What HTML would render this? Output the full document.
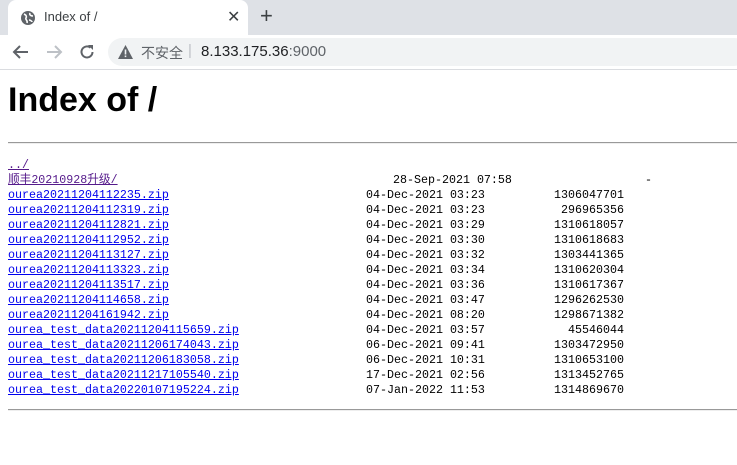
<!DOCTYPE html>
<html><head><meta charset="utf-8"><style>
*{margin:0;padding:0;box-sizing:border-box}
body{width:737px;height:465px;background:#fff;position:relative;overflow:hidden;font-family:"Liberation Sans","Noto Sans CJK SC",sans-serif}
.tabs{position:absolute;left:0;top:0;width:737px;height:35px;background:#dee1e6}
.tab{position:absolute;left:8px;top:0;width:240px;height:35px;background:#fff;border-radius:8px 8px 0 0}
.bar{position:absolute;left:0;top:35px;width:737px;height:35px;background:#fff;border-bottom:1px solid #dadce0}
.omni{position:absolute;left:108px;top:3px;width:640px;height:28px;background:#f1f3f4;border-radius:14px}
.r{position:absolute;left:0;height:15px;line-height:15px;font-family:"Liberation Mono","Noto Sans CJK SC",monospace;font-size:11.67px;white-space:pre;width:737px}
.r a{position:absolute;left:8px;color:#0000ee;text-decoration:underline}
.r a.v{color:#551a8b}
.r .d{position:absolute;left:366px;color:#000}
.r .s{position:absolute;right:113px;color:#000}
hr{position:absolute;left:8px;width:729px;border:0;border-top:1px solid #999;border-bottom:1px solid #eee;height:2px}
</style></head><body>
<div class="tabs"><div class="tab">
<svg style="position:absolute;left:12px;top:10px" width="16" height="16" viewBox="0 0 16 16"><circle cx="8" cy="8" r="7" fill="#5f6368"/><path d="M4 4c2 1 3 2 2 4s2 2 1 5M10 3c-1 2 1 3 3 3M9 10c1 0 3 1 3 2" stroke="#fff" stroke-width="1.6" fill="none"/></svg>
<span style="position:absolute;left:36px;top:9px;font-size:13px;color:#3c4043">Index of /</span>
<span style="position:absolute;left:219px;top:7px;font-size:16px;color:#3c4043">✕</span>
</div>
<span style="position:absolute;left:260px;top:3px;font-size:22px;color:#3c4043">+</span></div>
<div class="bar">
<svg style="position:absolute;left:12px;top:9px" width="18" height="16" viewBox="0 0 18 16"><path d="M16 8H3M8 2L2 8l6 6" stroke="#5f6368" stroke-width="2" fill="none"/></svg>
<svg style="position:absolute;left:45px;top:9px" width="18" height="16" viewBox="0 0 18 16"><path d="M2 8h13M10 2l6 6-6 6" stroke="#bdc1c6" stroke-width="2" fill="none"/></svg>
<svg style="position:absolute;left:78px;top:8px" width="18" height="18" viewBox="0 0 18 18"><path d="M14.5 9A5.5 5.5 0 1 1 12.5 4.7" stroke="#5f6368" stroke-width="2" fill="none"/><path d="M10 2h5v5z" fill="#5f6368"/></svg>
<div class="omni">
<svg style="position:absolute;left:10px;top:7px" width="15" height="14" viewBox="0 0 15 14"><path d="M7.5 0L15 14H0z" fill="#5f6368"/><rect x="6.7" y="4.5" width="1.6" height="5" fill="#f1f3f4"/><rect x="6.7" y="10.5" width="1.6" height="1.6" fill="#f1f3f4"/></svg>
<span style="position:absolute;left:33px;top:5px;font-size:14px;color:#5f6368">不安全</span>
<span style="position:absolute;left:80px;top:4px;font-size:15px;color:#bdc1c6">|</span>
<span style="position:absolute;left:93px;top:5px;font-size:15px;color:#202124">8.133.175.36<span style="color:#5f6368">:9000</span></span>
</div></div>
<h1 style="position:absolute;left:8px;top:81px;font-size:34px;font-weight:bold;color:#000">Index of /</h1>
<hr style="top:142px">
<div class="r" style="top:158px"><a class="v">../</a></div>
<div class="r" style="top:173px"><a class="v">顺丰20210928升级/</a><span class="d" style="left:393px">28-Sep-2021 07:58</span><span class="s" style="right:85px">-</span></div>
<div class="r" style="top:188px"><a>ourea20211204112235.zip</a><span class="d">04-Dec-2021 03:23</span><span class="s">1306047701</span></div>
<div class="r" style="top:203px"><a>ourea20211204112319.zip</a><span class="d">04-Dec-2021 03:23</span><span class="s">296965356</span></div>
<div class="r" style="top:218px"><a>ourea20211204112821.zip</a><span class="d">04-Dec-2021 03:29</span><span class="s">1310618057</span></div>
<div class="r" style="top:233px"><a>ourea20211204112952.zip</a><span class="d">04-Dec-2021 03:30</span><span class="s">1310618683</span></div>
<div class="r" style="top:248px"><a>ourea20211204113127.zip</a><span class="d">04-Dec-2021 03:32</span><span class="s">1303441365</span></div>
<div class="r" style="top:263px"><a>ourea20211204113323.zip</a><span class="d">04-Dec-2021 03:34</span><span class="s">1310620304</span></div>
<div class="r" style="top:278px"><a>ourea20211204113517.zip</a><span class="d">04-Dec-2021 03:36</span><span class="s">1310617367</span></div>
<div class="r" style="top:293px"><a>ourea20211204114658.zip</a><span class="d">04-Dec-2021 03:47</span><span class="s">1296262530</span></div>
<div class="r" style="top:308px"><a>ourea20211204161942.zip</a><span class="d">04-Dec-2021 08:20</span><span class="s">1298671382</span></div>
<div class="r" style="top:323px"><a>ourea_test_data20211204115659.zip</a><span class="d">04-Dec-2021 03:57</span><span class="s">45546044</span></div>
<div class="r" style="top:338px"><a>ourea_test_data20211206174043.zip</a><span class="d">06-Dec-2021 09:41</span><span class="s">1303472950</span></div>
<div class="r" style="top:353px"><a>ourea_test_data20211206183058.zip</a><span class="d">06-Dec-2021 10:31</span><span class="s">1310653100</span></div>
<div class="r" style="top:368px"><a>ourea_test_data20211217105540.zip</a><span class="d">17-Dec-2021 02:56</span><span class="s">1313452765</span></div>
<div class="r" style="top:383px"><a>ourea_test_data20220107195224.zip</a><span class="d">07-Jan-2022 11:53</span><span class="s">1314869670</span></div>
<hr style="top:409px">
</body></html>
